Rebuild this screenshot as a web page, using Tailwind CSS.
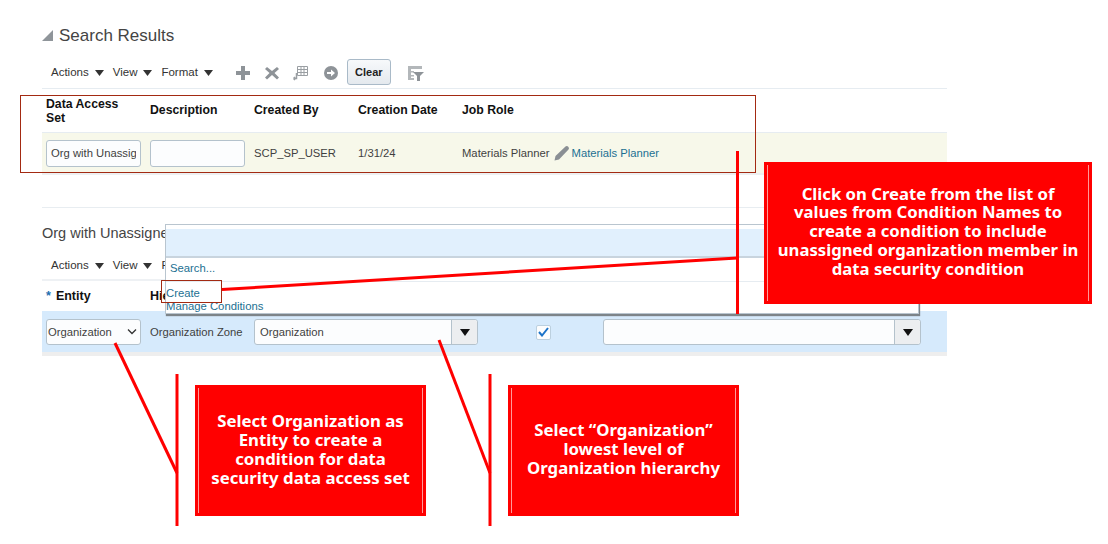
<!DOCTYPE html>
<html><head><meta charset="utf-8">
<script src="https://cdn.jsdelivr.net/npm/@tailwindcss/browser@4"></script>
</head>
<body class="bg-white">
<div class="relative w-[1108px] h-[544px] overflow-hidden bg-white font-['Liberation_Sans',Arial,sans-serif] text-[#3f3f3f]">
  <main class="ml-[42px] w-[905px] pt-[25px] flex flex-col">
    <div class="flex items-center h-[22px] gap-[6px]">
      <svg class="mt-[-2px]" width="11" height="11" viewBox="0 0 11 11"><path d="M11 0V11H0Z" fill="#8f959a"/></svg>
      <h2 class="text-[17px] leading-[22px] text-[#444]">Search Results</h2>
    </div>
    <div class="mt-[11px] h-[31px] flex items-center pl-[9px] text-[11.500px] text-[#333] border-b border-[#e6ecf1]">
      <span>Actions</span><svg class="ml-[6px] mr-[9px]" width="9" height="6"><path d="M0 0H9L4.500 6Z" fill="#333"/></svg>
      <span>View</span><svg class="ml-[6px] mr-[9px]" width="9" height="6"><path d="M0 0H9L4.500 6Z" fill="#333"/></svg>
      <span>Format</span><svg class="ml-[6px]" width="9" height="6"><path d="M0 0H9L4.500 6Z" fill="#333"/></svg>
      <svg class="ml-[23px]" width="14" height="14" viewBox="0 0 14 14"><path d="M5 0H9V5H14V9H9V14H5V9H0V5H5Z" fill="#8e9398"/></svg>
      <svg class="ml-[15px]" width="14" height="14" viewBox="0 0 14 14"><path d="M2 1L7 5L12 1L14 3L9.500 7L14 11.500L12 13.500L7 9L2 13.500L0 11.500L4.500 7L0 3Z" fill="#8e9398"/></svg>
      <svg class="ml-[14px]" width="15" height="15" viewBox="0 0 15 15" fill="none" stroke="#9a9fa3"><path d="M4.500 0.500H14.500V9.500H4.500ZM4.500 3.500H14.500M4.500 6.500H14.500M8 0.500V9.500M11 0.500V9.500"/><path d="M3.500 7V12.500H0.500M0.500 12.500L2 11M0.500 12.500L2 14" stroke-width="1.500"/></svg>
      <svg class="ml-[16px]" width="14" height="14" viewBox="0 0 14 14"><circle cx="7" cy="7" r="7" fill="#8e9398"/><path d="M3 6H7V3.500L11 7L7 10.500V8H3Z" fill="#fff"/></svg>
      <button class="ml-[9px] w-[44px] h-[26px] mt-[-2px] rounded-[3px] border border-[#a9bac8] bg-gradient-to-b from-[#f7f9fb] to-[#e4e9ee] text-[11px] font-bold text-[#222]">Clear</button>
      <svg class="ml-[17px]" width="16" height="15" viewBox="0 0 16 15"><path d="M0 0H14V3H3V5H6V6.500H3V9H6V10.500H3V12H6V14H0Z" fill="#b3b7ba"/><path d="M5 6H16L12 10V15H9V10Z" fill="#8e9398"/></svg>
    </div>
    <div class="h-[44px] grid grid-cols-[104px_104px_104px_104px_1fr] items-center pl-[4px] text-[12.250px] font-bold text-[#111] border-b border-[#e6ecf1]">
      <span class="leading-[14px]">Data Access<br>Set</span><span>Description</span><span>Created By</span><span>Creation Date</span><span>Job Role</span>
    </div>
    <div class="h-[42px] grid grid-cols-[104px_104px_104px_104px_1fr] items-center pl-[4px] text-[11.250px] bg-[#f7f8ea] border-b-2 border-[#edf0f2]">
      <span class="w-[95px] h-[27px] flex items-center pl-[4px] overflow-hidden rounded-[3px] border border-[#b4c2cc] bg-[#fcfdfe] whitespace-nowrap"><span class="w-[85px] overflow-hidden">Org with Unassigned</span></span>
      <span class="w-[95px] h-[27px] rounded-[3px] border border-[#b4c2cc] bg-[#fcfdfe]"></span>
      <span>SCP_SP_USER</span><span>1/31/24</span>
      <span class="flex items-center whitespace-nowrap">Materials Planner
        <svg class="ml-[4px] mr-[2px]" width="16" height="16" viewBox="0 0 16 16"><path d="M0.500 15.500L1.500 11L11.500 1.500Q13 0.500 14.500 2Q15.500 3.500 14.500 4.500L5 14.500Z" fill="#8a8f94"/></svg>
        <a class="text-[#1c7092]">Materials Planner</a></span>
    </div>
    <div class="mt-[32px] border-t border-[#e8edf1]"></div>
    <h2 class="mt-[16px] h-[18px] text-[14.500px] leading-[18px] text-[#444] whitespace-nowrap">Org with Unassigned</h2>
    <div class="mt-[10px] h-[29px] flex items-center pl-[9px] text-[11.500px] text-[#333] border-b-2 border-[#eef1f4]">
      <span>Actions</span><svg class="ml-[6px] mr-[9px]" width="9" height="6"><path d="M0 0H9L4.500 6Z" fill="#333"/></svg>
      <span>View</span><svg class="ml-[6px] mr-[9px]" width="9" height="6"><path d="M0 0H9L4.500 6Z" fill="#333"/></svg>
      <span>Format</span>
    </div>
    <div class="h-[30px] pt-[1px] grid grid-cols-[104px_1fr] items-center pl-[4px] text-[12.500px] font-bold text-[#111]">
      <span><span class="text-[#1e6fb0] mr-[5px]">*</span>Entity</span><span>Hierarchy</span>
    </div>
    <div class="h-[45px] grid grid-cols-[104px_104px_224px_1fr] items-center pl-[4px] pt-[1px] text-[11.250px] bg-[#d6eafc] border-b-4 border-[#eeeeee]">
      <span class="w-[95px] h-[26px] flex items-center justify-between pl-[1px] pr-[3px] rounded-[3px] border border-[#b4c2cc] bg-[#fcfdfe]">Organization
        <svg width="10" height="6" viewBox="0 0 10 6" fill="none" stroke="#333" stroke-width="1.300"><path d="M1 0.500L5 4.500L9 0.500"/></svg></span>
      <span>Organization Zone</span>
      <span class="h-[26px] flex rounded-[3px] border border-[#b4c2cc] bg-[#fcfdfe]">
        <span class="flex-1 flex items-center pl-[5px]">Organization</span>
        <span class="w-[26px] flex items-center justify-center border-l border-[#b4c2cc] bg-[#eceef0] rounded-r-[3px]"><svg width="10" height="7"><path d="M0 0H10L5 7Z" fill="#111"/></svg></span>
      </span>
      <span class="flex items-center">
        <span class="ml-[58px] w-[15px] h-[15px] flex items-center justify-center rounded-[2px] border border-[#bcd0df] bg-[#fcfdfe]"><svg width="11" height="10" viewBox="0 0 11 10" fill="none" stroke="#1b73c9" stroke-width="2"><path d="M1 5L4 8.500L10 1"/></svg></span>
        <span class="ml-[52px] w-[318px] h-[26px] flex rounded-[3px] border border-[#b4c2cc] bg-[#fcfdfe]">
          <span class="flex-1"></span>
          <span class="w-[26px] flex items-center justify-center border-l border-[#b4c2cc] bg-[#eceef0] rounded-r-[3px]"><svg width="10" height="7"><path d="M0 0H10L5 7Z" fill="#111"/></svg></span>
        </span>
      </span>
    </div>
  </main>

  <!-- dropdown popup -->
  <div class="absolute left-[165px] top-[224px] w-[754px] h-[90px] bg-white border border-[#b9c5cf] shadow-[1px_2px_1px_#7d8489] text-[11.300px] text-[#1c7092] flex flex-col">
    <div class="mt-[4px] h-[30px] bg-[#e1f0fd] border-b-2 border-[#c8d4de]"></div>
    <div class="h-[25px] flex items-center pl-[4px] pb-[2px] border-b border-[#e6ecf1]">Search...</div>
    <div class="pt-[5px] leading-[13px]">Create<br>Manage Conditions</div>
  </div>

  <!-- highlight frames -->
  <div class="absolute left-[20px] top-[95px] w-[736px] h-[78px] border border-[#a32a12]"></div>
  <div class="absolute left-[161px] top-[280px] w-[61px] h-[23px] border border-[#a32a12]"></div>

  <!-- connector lines -->
  <svg class="absolute left-0 top-0" width="1108" height="544" fill="none" stroke="#ff0000" stroke-width="3">
    <path d="M737.500 151V314"/>
    <path d="M737 258L222 289.500"/>
    <path d="M115 343L177 473"/>
    <path d="M177 374V526"/>
    <path d="M439 340L490 473"/>
    <path d="M490 374V526"/>
  </svg>

  <!-- callouts -->
  <div class="absolute left-[764px] top-[162px] w-[328px] h-[142px] bg-[#ff0000] flex items-center justify-center text-center text-white font-bold font-['Noto_Sans',sans-serif] text-[16.700px] leading-[18.800px]">
    <span class="absolute left-[3px] right-[3px] top-[3px] bottom-[3px] border-x border-[#ff9a9a]"></span>
    <p class="pb-[3px]">Click on Create from the list of<br>values from Condition Names to<br>create a condition to include<br>unassigned organization member in<br>data security condition</p>
  </div>
  <div class="absolute left-[195px] top-[385px] w-[231px] h-[131px] bg-[#ff0000] flex items-center justify-center text-center text-white font-bold font-['Noto_Sans',sans-serif] text-[16.800px] leading-[18.800px]">
    <span class="absolute left-[3px] right-[3px] top-[3px] bottom-[3px] border-x border-[#ff9a9a]"></span>
    <p class="pb-[1px]">Select Organization as<br>Entity to create a<br>condition for data<br>security data access set</p>
  </div>
  <div class="absolute left-[508px] top-[385px] w-[231px] h-[131px] bg-[#ff0000] flex items-center justify-center text-center text-white font-bold font-['Noto_Sans',sans-serif] text-[16.800px] leading-[18.800px]">
    <span class="absolute left-[3px] right-[3px] top-[3px] bottom-[3px] border-x border-[#ff9a9a]"></span>
    <p class="pb-[2px]">Select “Organization”<br>lowest level of<br>Organization hierarchy</p>
  </div>
</div>
</body></html>
